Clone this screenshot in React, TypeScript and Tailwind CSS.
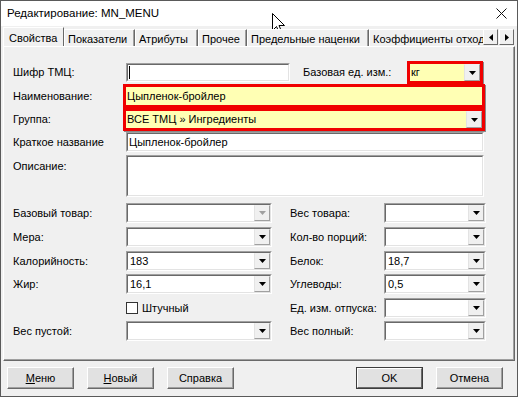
import React from "react";

const FONT = "font-['Liberation_Sans',Arial,sans-serif]";

function Sunken({ className = "", inner = "bg-white", children }: { className?: string; inner?: string; children?: React.ReactNode }) {
  return (
    <div className={`border border-t-[#a0a0a0] border-l-[#a0a0a0] border-r-white border-b-white ${className}`}>
      <div className={`h-full w-full border border-t-[#696969] border-l-[#696969] border-r-[#e3e3e3] border-b-[#e3e3e3] flex items-center ${inner}`}>
        {children}
      </div>
    </div>
  );
}

function DropBtn({ disabled = false }: { disabled?: boolean }) {
  return (
    <div className="ml-auto w-[16px] h-full shrink-0 flex items-center justify-center bg-[#f0f0f0] border border-t-[#f0f0f0] border-l-[#e3e3e3] border-r-[#a0a0a0] border-b-[#a0a0a0]">
      <svg width="7" height="4" viewBox="0 0 7 4">
        <path d="M0 0H7L3.5 4Z" fill={disabled ? "#a0a0a0" : "#000"} />
      </svg>
    </div>
  );
}

function Combo({ w, value, disabled = false }: { w: string; value?: string; disabled?: boolean }) {
  return (
    <Sunken className={`${w} h-[20px]`}>
      <span className="pl-[2px] text-[11px]">{value}</span>
      <DropBtn disabled={disabled} />
    </Sunken>
  );
}

function Label({ w, children, className = "" }: { w: string; children: React.ReactNode; className?: string }) {
  return <div className={`${w} shrink-0 text-[11px] whitespace-nowrap ${className}`}>{children}</div>;
}

function Tab({ w, label, selected = false }: { w: string; label: string; selected?: boolean }) {
  if (selected) {
    return (
      <div className={`${w} h-[20px] -mb-[1px] shrink-0 bg-[#f0f0f0] border border-b-0 border-t-white border-l-white border-r-[#696969] pl-[5px] pt-[2px] text-[11px] whitespace-nowrap overflow-hidden`}>
        {label}
      </div>
    );
  }
  return (
    <div className={`${w} h-[17px] shrink-0 bg-[#f0f0f0] border border-b-0 border-t-white border-l-white border-r-[#696969] shadow-[inset_-1px_0_0_#a0a0a0] pl-[3px] pt-[1px] text-[11px] whitespace-nowrap overflow-hidden`}>
      {label}
    </div>
  );
}

function Btn({ children, def = false, className = "" }: { children: React.ReactNode; def?: boolean; className?: string }) {
  if (def) {
    return (
      <div className={`w-[67px] h-[22px] border border-[#3c3c3c] ${className}`}>
        <div className="h-full w-full bg-[#e1e1e1] border border-t-white border-l-white border-r-[#696969] border-b-[#696969] flex items-center justify-center text-[11px]">
          {children}
        </div>
      </div>
    );
  }
  return (
    <div className={`w-[67px] h-[22px] bg-[#e1e1e1] border border-t-white border-l-white border-r-[#696969] border-b-[#696969] shadow-[inset_-1px_-1px_0_#a0a0a0] flex items-center justify-center text-[11px] ${className}`}>
      {children}
    </div>
  );
}

function RedBox({ className = "", children }: { className?: string; children?: React.ReactNode }) {
  return (
    <div className={`border-[3px] border-[#f00000] shadow-[1px_1px_0_#8a8a8a] ${className}`}>
      <div className="h-full w-full bg-[#ffffb4] flex items-center">{children}</div>
    </div>
  );
}

function GridRow({ l1, c1, l2, c2, className = "" }: { l1?: React.ReactNode; c1: React.ReactNode; l2: string; c2: React.ReactNode; className?: string }) {
  return (
    <div className={`flex items-center h-[20px] ${className}`}>
      <Label w="w-[113px]">{l1}</Label>
      <div className="w-[146px] shrink-0">{c1}</div>
      <div className="w-[18px] shrink-0" />
      <Label w="w-[94px]">{l2}</Label>
      {c2}
    </div>
  );
}

export default function App() {
  return (
    <div className={`relative w-[518px] h-[397px] overflow-hidden border border-[#5a5a5a] bg-[#f0f0f0] flex flex-col text-black ${FONT}`}>
      {/* Title bar */}
      <div className="h-[25px] shrink-0 bg-white flex items-center pl-[6px]">
        <span className="text-[11.5px]">Редактирование: MN_MENU</span>
        <svg className="ml-auto mr-[10px]" width="11" height="11" viewBox="0 0 11 11">
          <path d="M0.5 0.5L10.5 10.5M10.5 0.5L0.5 10.5" stroke="#111" strokeWidth="1" />
        </svg>
      </div>

      {/* Body */}
      <div className="flex-1 flex flex-col px-[2px] pt-[1px]">
        {/* Tabs */}
        <div className="relative z-10 flex h-[19px] items-end">
          <div className="w-[480px] h-full flex items-end overflow-hidden">
            <Tab w="w-[61px]" label="Свойства" selected />
            <Tab w="w-[71px]" label="Показатели" />
            <Tab w="w-[63px]" label="Атрибуты" />
            <Tab w="w-[49px]" label="Прочее" />
            <Tab w="w-[122px]" label="Предельные наценки" />
            <Tab w="w-[130px]" label="Коэффициенты отходов" />
          </div>
          <div className="flex items-end h-full pb-[1px]">
            <div className="w-[15px] h-[16px] bg-[#f0f0f0] border border-t-white border-l-white border-r-[#696969] border-b-[#696969] flex items-center justify-center">
              <svg width="4" height="7" viewBox="0 0 4 7"><path d="M4 0V7L0 3.5Z" fill="#000" /></svg>
            </div>
            <div className="w-[15px] h-[16px] ml-[1px] bg-[#f0f0f0] border border-t-white border-l-white border-r-[#696969] border-b-[#696969] flex items-center justify-center">
              <svg width="4" height="7" viewBox="0 0 4 7"><path d="M0 0V7L4 3.5Z" fill="#000" /></svg>
            </div>
          </div>
        </div>

        {/* Panel */}
        <div className="h-[315px] shrink-0 border border-t-white border-l-white border-r-[#696969] border-b-[#696969] shadow-[inset_-1px_-1px_0_#a0a0a0] pl-[9px] flex flex-col">
          {/* Row A */}
          <div className="mt-[14px] h-[23px] flex items-center">
            <Label w="w-[113px]">Шифр ТМЦ:</Label>
            <Sunken className="w-[164px] h-[19px]">
              <div className="ml-[1px] w-[1px] h-[13px] bg-black" />
            </Sunken>
            <Label w="w-[104px]" className="ml-[13px]">Базовая ед. изм.:</Label>
            <RedBox className="w-[76px] h-[23px]">
              <span className="pl-[1px] text-[11px]">кг</span>
              <DropBtn />
            </RedBox>
          </div>
          {/* Row B */}
          <div className="h-[24px] flex items-center">
            <Label w="w-[110px]">Наименование:</Label>
            <RedBox className="w-[362px] h-[24px]">
              <span className="pl-[1px] text-[11px]">Цыпленок-бройлер</span>
            </RedBox>
          </div>
          {/* Row C */}
          <div className="h-[23px] flex items-center">
            <Label w="w-[110px]">Группа:</Label>
            <RedBox className="w-[362px] h-[23px]">
              <span className="pl-[1px] text-[11px]">ВСЕ ТМЦ » Ингредиенты</span>
              <DropBtn />
            </RedBox>
          </div>
          {/* Row D */}
          <div className="mt-[1px] h-[20px] flex items-center">
            <Label w="w-[113px]">Краткое название</Label>
            <Sunken className="w-[358px] h-[20px]">
              <span className="pl-[1px] text-[11px]">Цыпленок-бройлер</span>
            </Sunken>
          </div>
          {/* Row E */}
          <div className="mt-[3px] h-[42px] flex items-start">
            <Label w="w-[113px]" className="pt-[3px]">Описание:</Label>
            <Sunken className="w-[358px] h-[42px]" />
          </div>

          {/* Grid */}
          <GridRow className="mt-[6px]" l1="Базовый товар:" c1={<Combo w="w-[146px]" disabled />} l2="Вес товара:" c2={<Combo w="w-[102px]" />} />
          <GridRow className="mt-[4px]" l1="Мера:" c1={<Combo w="w-[146px]" />} l2="Кол-во порций:" c2={<Combo w="w-[102px]" />} />
          <GridRow className="mt-[4px]" l1="Калорийность:" c1={<Combo w="w-[146px]" value="183" />} l2="Белок:" c2={<Combo w="w-[102px]" value="18,7" />} />
          <GridRow className="mt-[3px]" l1="Жир:" c1={<Combo w="w-[146px]" value="16,1" />} l2="Углеводы:" c2={<Combo w="w-[102px]" value="0,5" />} />
          <GridRow
            className="mt-[4px]"
            l1=""
            c1={
              <div className="flex items-center">
                <div className="w-[12px] h-[12px] bg-white border border-[#333]" />
                <span className="ml-[4px] text-[11px]">Штучный</span>
              </div>
            }
            l2="Ед. изм. отпуска:"
            c2={<Combo w="w-[102px]" />}
          />
          <GridRow className="mt-[3px]" l1="Вес пустой:" c1={<Combo w="w-[146px]" />} l2="Вес полный:" c2={<Combo w="w-[102px]" />} />
        </div>

        {/* Buttons */}
        <div className="flex-1 flex items-start pt-[6px] pl-[4px]">
          <Btn><span><span className="underline">М</span>еню</span></Btn>
          <Btn className="ml-[13px]"><span><span className="underline">Н</span>овый</span></Btn>
          <Btn className="ml-[13px]">Справка</Btn>
          <Btn def className="ml-[122px]">OK</Btn>
          <Btn className="ml-[13px]">Отмена</Btn>
        </div>
      </div>

      {/* Mouse cursor overlay */}
      <svg className="absolute left-[271px] top-[12px]" width="14" height="22" viewBox="0 0 14 22">
        <path d="M0.5 0.5V17.5L4.5 13.5L7.5 20.5L10 19.5L7 12.5H12.5Z" fill="#fff" stroke="#000" strokeWidth="1" strokeLinejoin="miter" />
      </svg>
    </div>
  );
}
